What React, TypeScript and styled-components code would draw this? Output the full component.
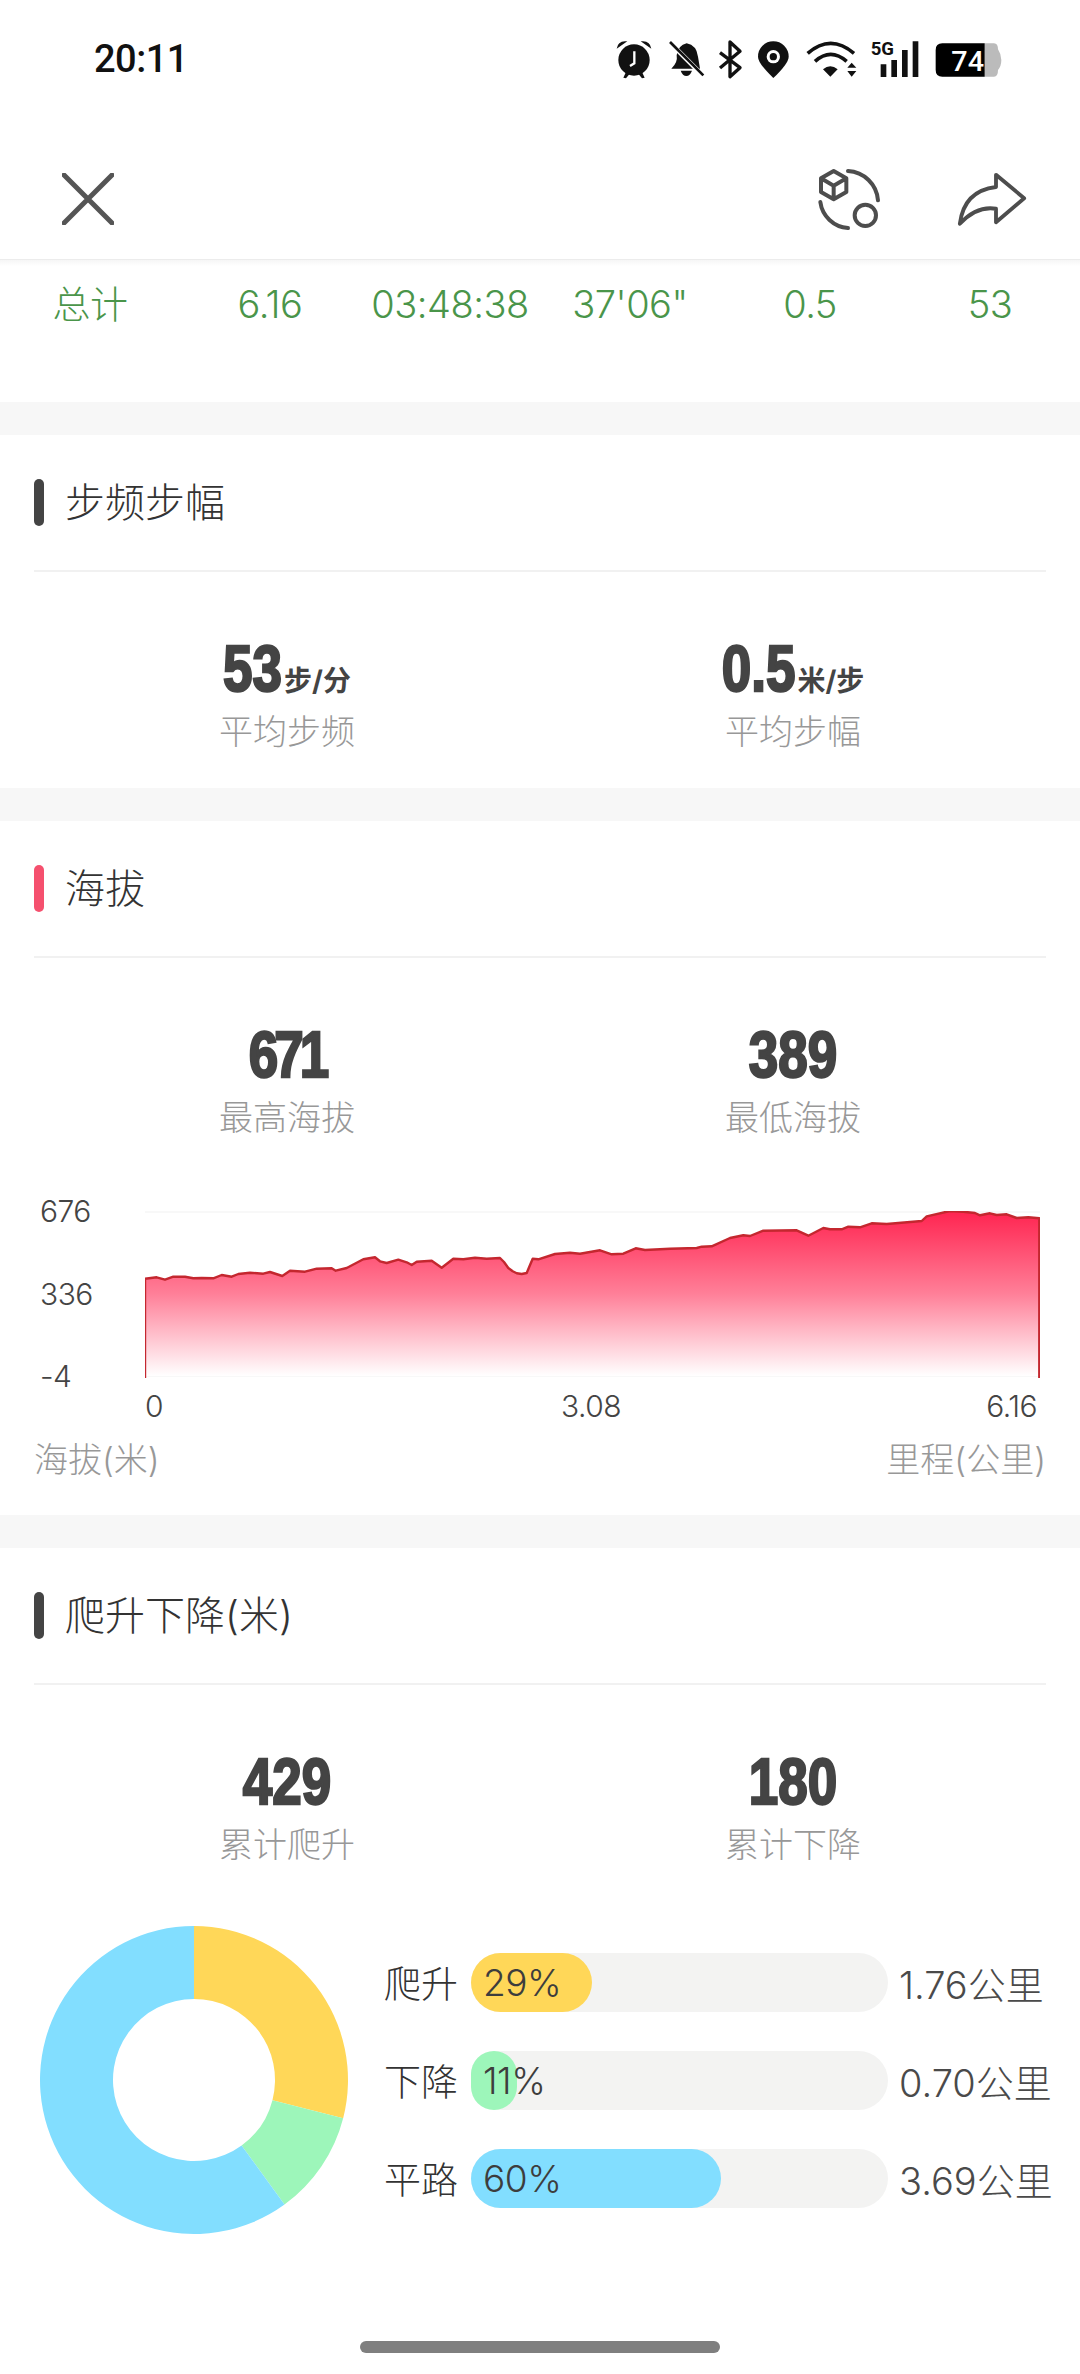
import styled, { createGlobalStyle } from 'styled-components';

const GlobalStyle = createGlobalStyle`
    html, body {
        margin: 0;
        padding: 0;
        background: #fff;
    }
    * {
        box-sizing: border-box;
    }
`;

const sans = `Inter, "Noto Sans CJK SC", sans-serif`;

const leftTrace = [
    [75, 272], [110, 268], [135, 275], [160, 266], [195, 266], [220, 271], [245, 270], [280, 271], [305, 261],
    [335, 266], [355, 258], [390, 254], [430, 257], [450, 252], [487, 264], [510, 248], [555, 251], [590, 242],
    [635, 241], [647, 248], [680, 240], [730, 214], [765, 208], [780, 220], [800, 225], [835, 215], [860, 223],
    [875, 231], [890, 221], [935, 218], [965, 239], [1000, 212], [1030, 214], [1065, 209], [1100, 212], [1140, 210],
    [1152, 222], [1165, 240], [1178, 250], [1190, 256], [1205, 258], [1220, 255], [1228, 236], [1238, 212],
    [1255, 214], [1305, 198], [1350, 194],
];

const rightTrace = [
    [30, 197], [90, 187], [125, 199], [160, 197], [197, 181], [225, 186], [300, 182], [380, 180], [395, 176],
    [425, 175], [480, 150], [520, 142], [540, 144], [580, 128], [680, 127], [715, 143], [760, 120], [780, 124],
    [815, 124], [835, 116], [870, 118], [905, 106], [950, 108], [1055, 99], [1070, 85], [1140, 69], [1180, 71],
    [1215, 75], [1230, 82], [1260, 76], [1280, 81], [1310, 79], [1340, 90], [1375, 88], [1408, 91],
];

const trace = [
    ...leftTrace.map(([x, y]) => [120 + x / 3 - 145, 1190 + y / 3 - 1213]),
    ...rightTrace.map(([x, y]) => [570 + x / 3 - 145, 1190 + y / 3 - 1213]),
];

const line = trace.map(([x, y]) => `${x.toFixed(1)},${y.toFixed(1)}`).join(' L');
const first = trace[0][0].toFixed(1);
const last = trace[trace.length - 1][0].toFixed(1);

const summary = ['总计', '6.16', '03:48:38', `37'06"`, '0.5', '53'];

const slices = [
    { label: '爬升', percent: 29, distance: '1.76公里', color: '#ffd758' },
    { label: '下降', percent: 11, distance: '0.70公里', color: '#9df6ba' },
    { label: '平路', percent: 60, distance: '3.69公里', color: '#82deff' },
];

const polar = (r: number, turn: number) => {
    const a = turn * 2 * Math.PI;
    return `${(154 + r * Math.sin(a)).toFixed(2)} ${(154 - r * Math.cos(a)).toFixed(2)}`;
};

const slicePath = (from: number, to: number) => {
    const large = to - from > 0.5 ? 1 : 0;
    return `M${polar(154, from)} A154 154 0 ${large} 1 ${polar(154, to)} L${polar(81, to)} A81 81 0 ${large} 0 ${polar(81, from)} Z`;
};

const Donut = () => {
    let start = 0;
    return (
        <DonutSvg viewBox="0 0 308 308">
            {slices.map((s) => {
                const from = start;
                start += s.percent / 100;
                return <path key={s.label} d={slicePath(from, start)} fill={s.color} />;
            })}
        </DonutSvg>
    );
};

const StatusIcons = () => (
    <StatusSvg viewBox="100 50 1170 135">
        <g fill="#111">
            <circle cx="160" cy="122" r="47" />
            <path d="M108 88 Q112 62 140 66 Z M212 88 Q208 62 180 66 Z" />
            <path d="M128 175 L136 158 L146 165 L136 177 Z M192 175 L184 158 L174 165 L184 177 Z" />
        </g>
        <path d="M161 96 V132 L148 140" fill="none" stroke="#fff" strokeWidth="7" />
        <path d="M272 148 Q292 130 288 108 Q292 78 318 72 Q348 78 352 112 L358 148 Z" fill="#111" />
        <path d="M300 154 H334 Q328 170 317 170 Q306 170 300 154 Z" fill="#111" />
        <path d="M268 70 L366 168" stroke="#fff" strokeWidth="14" />
        <path d="M268 68 L368 168" stroke="#111" strokeWidth="8" />
        <path d="M418 100 L478 145 L448 172 V68 L478 96 L418 146" fill="none" stroke="#111" strokeWidth="10" strokeLinejoin="round" />
        <path d="M578 176 Q532 132 532 112 A46 46 0 0 1 624 112 Q624 132 578 176 Z" fill="#111" />
        <circle cx="578" cy="112" r="20" fill="#fff" />
        <circle cx="578" cy="112" r="11" fill="#111" />
        <path d="M681 102 Q750 42 820 102 M703 126 Q750 84 798 126" fill="none" stroke="#111" strokeWidth="11" />
        <path d="M727 150 Q749 132 771 150 L749 172 Z M800 145 L813 130 L827 145 Z M800 155 H827 L813 172 Z" fill="#111" />
        <text x="870" y="106" fontFamily="Roboto, sans-serif" fontWeight="700" fontSize="56" textLength="70" lengthAdjust="spacingAndGlyphs" fill="#111">5G</text>
        <path d="M900 135 h17 v38 h-17 Z M932 122 h17 v51 h-17 Z M964 92 h17 v81 h-17 Z M996 66 h17 v107 h-17 Z" fill="#111" />
        <path d="M1212 72 H1240 Q1252 72 1252 90 Q1262 105 1262 122 Q1262 140 1252 152 Q1252 172 1240 172 H1212 Z" fill="#bbb" />
        <path d="M1212 72 H1085 Q1065 72 1065 92 V152 Q1065 172 1085 172 H1212 Z" fill="#000" />
        <text x="1112" y="156" fontFamily="Roboto, sans-serif" fontWeight="500" fontSize="84" textLength="98" lengthAdjust="spacingAndGlyphs" fill="#fff">74</text>
    </StatusSvg>
);

const App = () => (
    <Page>
        <GlobalStyle />
        <StatusBar>
            <Clock>20:11</Clock>
            <StatusIcons />
        </StatusBar>

        <Toolbar>
            <IconSvg $w={52} viewBox="0 0 52 52">
                <path d="M2 2 L50 50 M50 2 L2 50" fill="none" stroke="#555" strokeWidth="5" strokeLinecap="round" />
            </IconSvg>
            <ToolbarRight>
                <IconSvg $w={65} viewBox="710 440 195 195">
                    <g fill="none" stroke="#4d4d4d" strokeWidth="12" strokeLinecap="round" strokeLinejoin="round">
                        <path d="M760 452 L798 474 V515 L760 537 L722 515 V474 Z M722 474 L760 496 L798 474 M760 496 V537" />
                        <path d="M803 452 A95 95 0 0 1 893 540 M720 545 A90 90 0 0 0 803 623" />
                        <circle cx="855" cy="585" r="32" />
                    </g>
                </IconSvg>
                <IconSvg $w={72} viewBox="1125 450 225 175">
                    <path
                        d="M1137 615 Q1150 512 1250 500 V462 L1338 535 L1250 610 V568 Q1190 558 1137 615 Z"
                        fill="none"
                        stroke="#4d4d4d"
                        strokeWidth="12"
                        strokeLinejoin="round"
                    />
                </IconSvg>
            </ToolbarRight>
        </Toolbar>

        <SummaryRow>
            {summary.map((item) => (
                <SummaryCell key={item}>{item}</SummaryCell>
            ))}
        </SummaryRow>

        <Band />

        <Section>
            <SectionHeader>
                <Marker $color="#444" />
                <Title>步频步幅</Title>
            </SectionHeader>
            <Stats>
                <Stat>
                    <Value>
                        <Digits>53</Digits>
                        <Unit>步/分</Unit>
                    </Value>
                    <Caption>平均步频</Caption>
                </Stat>
                <Stat>
                    <Value>
                        <Digits>0.5</Digits>
                        <Unit>米/步</Unit>
                    </Value>
                    <Caption>平均步幅</Caption>
                </Stat>
            </Stats>
        </Section>

        <Band />

        <Section>
            <SectionHeader>
                <Marker $color="#f5506e" />
                <Title>海拔</Title>
            </SectionHeader>
            <Stats>
                <Stat>
                    <Value>
                        <Digits $tight>671</Digits>
                    </Value>
                    <Caption>最高海拔</Caption>
                </Stat>
                <Stat>
                    <Value>
                        <Digits>389</Digits>
                    </Value>
                    <Caption>最低海拔</Caption>
                </Stat>
            </Stats>
            <Chart>
                <YAxis>
                    <AxisLabel>676</AxisLabel>
                    <AxisLabel>336</AxisLabel>
                    <AxisLabel>-4</AxisLabel>
                </YAxis>
                <PlotColumn>
                    <Plot viewBox="0 0 895 168">
                        <defs>
                            <linearGradient id="elevationFill" x1="0" y1="0" x2="0" y2="1">
                                <stop offset="0" stopColor="#ff2450" />
                                <stop offset="0.5" stopColor="#ff7f98" />
                                <stop offset="1" stopColor="#ffffff" />
                            </linearGradient>
                        </defs>
                        <path d="M0 1 H895 M0 165 H895" stroke="#f8f8f8" strokeWidth="2" />
                        <path d={`M${first},165 L${line} L${last},165 Z`} fill="url(#elevationFill)" />
                        <path
                            d={`M${first},167 L${line} L${last},167`}
                            fill="none"
                            stroke="#c4272f"
                            strokeWidth="2.4"
                            strokeLinejoin="round"
                        />
                    </Plot>
                    <XAxis>
                        <AxisLabel>0</AxisLabel>
                        <AxisLabel>3.08</AxisLabel>
                        <AxisLabel>6.16</AxisLabel>
                    </XAxis>
                </PlotColumn>
            </Chart>
            <AxisTitles>
                <span>海拔(米)</span>
                <span>里程(公里)</span>
            </AxisTitles>
        </Section>

        <Band />

        <Section>
            <SectionHeader>
                <Marker $color="#444" />
                <Title>爬升下降(米)</Title>
            </SectionHeader>
            <Stats>
                <Stat>
                    <Value>
                        <Digits>429</Digits>
                    </Value>
                    <Caption>累计爬升</Caption>
                </Stat>
                <Stat>
                    <Value>
                        <Digits>180</Digits>
                    </Value>
                    <Caption>累计下降</Caption>
                </Stat>
            </Stats>
            <Breakdown>
                <Donut />
                <BarList>
                    {slices.map((s) => (
                        <BarRow key={s.label}>
                            <BarLabel>{s.label}</BarLabel>
                            <Track>
                                <Fill $color={s.color} style={{ width: `${s.percent}%` }} />
                                <Percent>{s.percent}%</Percent>
                            </Track>
                            <Distance>{s.distance}</Distance>
                        </BarRow>
                    ))}
                </BarList>
            </Breakdown>
        </Section>

        <HomeIndicator />
    </Page>
);

export default App;

const Page = styled.div`
    position: relative;
    width: 1080px;
    height: 2374px;
    overflow: hidden;
    background: #fff;
    font-family: ${sans};
    color: #444;
`;

const StatusBar = styled.div`
    height: 125px;
    padding: 0 76px 0 94px;
    display: flex;
    align-items: flex-start;
    justify-content: space-between;
`;

const Clock = styled.div`
    margin-top: 37px;
    font-family: Roboto, sans-serif;
    font-size: 38px;
    line-height: 44px;
    font-weight: 500;
    letter-spacing: -0.5px;
    color: #111;
`;

const StatusSvg = styled.svg`
    margin-top: 36px;
    width: 390px;
    height: 45px;
`;

const Toolbar = styled.div`
    height: 135px;
    padding: 14px 52px 0 62px;
    display: flex;
    align-items: center;
    justify-content: space-between;
    border-bottom: 1px solid #ececec;
`;

const ToolbarRight = styled.div`
    display: flex;
    align-items: center;
    gap: 74px;
`;

const IconSvg = styled.svg<{ $w: number }>`
    width: ${(p) => p.$w}px;
    height: ${(p) => p.$w}px;
    display: block;
`;

const SummaryRow = styled.div`
    height: 142px;
    padding-top: 24px;
    display: grid;
    grid-template-columns: repeat(6, 1fr);
    align-items: start;
    background: linear-gradient(#f6f6f6, #fff 6px);
`;

const SummaryCell = styled.div`
    text-align: center;
    font-size: 38px;
    line-height: 40px;
    font-weight: 300;
    letter-spacing: -0.5px;
    color: #4a954a;
`;

const Band = styled.div`
    height: 33px;
    background: #f7f7f7;
`;

const Section = styled.section`
    padding: 0 34px;
`;

const SectionHeader = styled.div`
    height: 137px;
    display: flex;
    align-items: center;
    gap: 21px;
    border-bottom: 2px solid #f1f1f1;
`;

const Marker = styled.div<{ $color: string }>`
    width: 10px;
    height: 47px;
    border-radius: 5px;
    background: ${(p) => p.$color};
`;

const Title = styled.div`
    font-size: 40px;
    line-height: 48px;
    font-weight: 300;
    color: #333;
`;

const Stats = styled.div`
    display: grid;
    grid-template-columns: 1fr 1fr;
    padding-top: 67px;
    height: 216px;
`;

const Stat = styled.div`
    display: flex;
    flex-direction: column;
    align-items: center;
`;

const Value = styled.div`
    height: 68px;
    display: flex;
    align-items: baseline;
    color: #444;
`;

const Digits = styled.span<{ $tight?: boolean }>`
    display: inline-block;
    font-family: "Liberation Sans", sans-serif;
    font-size: 53px;
    line-height: 68px;
    font-weight: 700;
    letter-spacing: ${(p) => (p.$tight ? '-4px' : '0')};
    -webkit-text-stroke: 2px #444;
    transform: scaleY(1.22);
    transform-origin: center 52px;
`;

const Unit = styled.span`
    margin-left: 2px;
    font-size: 28px;
    font-weight: 700;
`;

const Caption = styled.div`
    margin-top: 5px;
    font-size: 34px;
    line-height: 40px;
    font-weight: 300;
    color: #989898;
`;

const Chart = styled.div`
    display: flex;
    margin-top: 27px;
`;

const YAxis = styled.div`
    width: 111px;
    height: 195px;
    margin-top: -5px;
    padding-left: 6px;
    display: flex;
    flex-direction: column;
    justify-content: space-between;
`;

const AxisLabel = styled.div`
    font-size: 30px;
    line-height: 30px;
    font-weight: 300;
    letter-spacing: -0.5px;
    color: #444;
`;

const PlotColumn = styled.div`
    margin-top: 10px;
    width: 895px;
`;

const Plot = styled.svg`
    width: 895px;
    height: 168px;
    display: block;
`;

const XAxis = styled.div`
    margin-top: 12px;
    padding-right: 3px;
    display: grid;
    grid-template-columns: 1fr auto 1fr;

    & > :last-child {
        justify-self: end;
    }
`;

const AxisTitles = styled.div`
    margin-top: 19px;
    height: 75px;
    display: flex;
    justify-content: space-between;
    font-size: 34px;
    line-height: 40px;
    font-weight: 300;
    color: #989898;
`;

const Breakdown = styled.div`
    margin-top: 25px;
    padding-left: 6px;
    display: flex;
    align-items: center;
`;

const DonutSvg = styled.svg`
    width: 308px;
    height: 308px;
    flex: none;
`;

const BarList = styled.div`
    margin-left: 36px;
    display: flex;
    flex-direction: column;
    gap: 39px;
    width: 680px;
`;

const BarRow = styled.div`
    display: flex;
    align-items: center;
    height: 59px;
`;

const BarLabel = styled.div`
    width: 87px;
    font-size: 37px;
    font-weight: 300;
    color: #333;
`;

const Track = styled.div`
    position: relative;
    width: 417px;
    height: 59px;
    border-radius: 30px;
    background: #f3f3f2;
`;

const Fill = styled.div<{ $color: string }>`
    height: 100%;
    border-radius: 30px;
    background: ${(p) => p.$color};
`;

const Percent = styled.span`
    position: absolute;
    left: 12px;
    top: 0;
    font-size: 37px;
    line-height: 59px;
    font-weight: 300;
    letter-spacing: -0.5px;
    color: #3d3d3d;
`;

const Distance = styled.div`
    margin-left: 11px;
    white-space: nowrap;
    font-size: 38px;
    font-weight: 300;
    color: #4a4a4a;
`;

const HomeIndicator = styled.div`
    position: absolute;
    left: 360px;
    bottom: 21px;
    width: 360px;
    height: 12px;
    border-radius: 6px;
    background: #7f7f7f;
`;
